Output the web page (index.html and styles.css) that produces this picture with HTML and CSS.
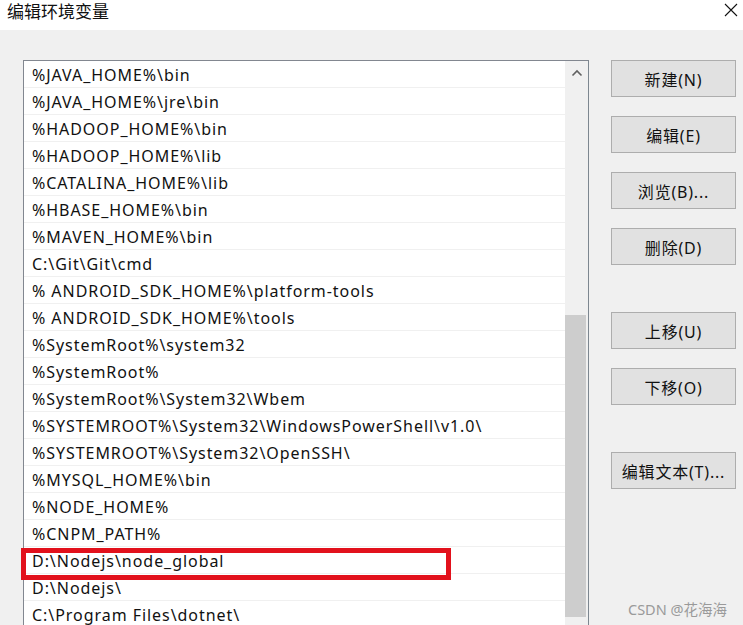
FILE: index.html
```html
<!DOCTYPE html>
<html lang="zh-CN">
<head>
<meta charset="utf-8">
<title>编辑环境变量</title>
<link rel="stylesheet" href="styles.css">
</head>
<body>
<div class="window">
  <div class="titlebar">
    <span class="title">编辑环境变量</span>
    <svg class="close" width="14" height="14" viewBox="0 0 14 14"><path d="M1 1 L13 13 M13 1 L1 13" stroke="#111" stroke-width="1.1" fill="none"/></svg>
  </div>
  <div class="content">
    <div class="listbox">
      <ul class="rows">
        <li class="row">%JAVA_HOME%\bin</li>
        <li class="row">%JAVA_HOME%\jre\bin</li>
        <li class="row">%HADOOP_HOME%\bin</li>
        <li class="row">%HADOOP_HOME%\lib</li>
        <li class="row">%CATALINA_HOME%\lib</li>
        <li class="row">%HBASE_HOME%\bin</li>
        <li class="row">%MAVEN_HOME%\bin</li>
        <li class="row">C:\Git\Git\cmd</li>
        <li class="row">% ANDROID_SDK_HOME%\platform-tools</li>
        <li class="row">% ANDROID_SDK_HOME%\tools</li>
        <li class="row">%SystemRoot%\system32</li>
        <li class="row">%SystemRoot%</li>
        <li class="row">%SystemRoot%\System32\Wbem</li>
        <li class="row">%SYSTEMROOT%\System32\WindowsPowerShell\v1.0\</li>
        <li class="row">%SYSTEMROOT%\System32\OpenSSH\</li>
        <li class="row">%MYSQL_HOME%\bin</li>
        <li class="row">%NODE_HOME%</li>
        <li class="row">%CNPM_PATH%</li>
        <li class="row marked">D:\Nodejs\node_global<span class="highlight"></span></li>
        <li class="row">D:\Nodejs\</li>
        <li class="row">C:\Program Files\dotnet\</li>
      </ul>
      <div class="scrollbar">
        <div class="scroll-up">
          <svg width="12" height="8" viewBox="0 0 12 8"><path d="M1.5 6.5 L6 2 L10.5 6.5" stroke="#606060" stroke-width="1.6" fill="none"/></svg>
        </div>
        <div class="thumb"></div>
      </div>
    </div>
    <div class="buttons">
      <div class="group">
        <button class="btn">新建(N)</button>
        <button class="btn">编辑(E)</button>
        <button class="btn">浏览(B)...</button>
        <button class="btn">删除(D)</button>
      </div>
      <div class="group">
        <button class="btn">上移(U)</button>
        <button class="btn">下移(O)</button>
      </div>
      <div class="group">
        <button class="btn">编辑文本(T)...</button>
      </div>
    </div>
  </div>
  <div class="watermark">CSDN @花海海</div>
</div>
</body>
</html>
```
FILE: styles.css
```css
html, body {
  margin: 0;
  padding: 0;
  height: 100%;
  overflow: hidden;
}
body {
  background: #f0f0f0;
  font-family: "Noto Sans", "Noto Sans CJK SC", sans-serif;
  color: #000;
}
.window {
  position: relative;
  height: 625px;
  overflow: hidden;
}
.titlebar {
  height: 30px;
  box-sizing: border-box;
  background: #fff;
  display: flex;
  align-items: flex-start;
  justify-content: space-between;
  padding: 1px 4px 0 7px;
}
.title {
  font-family: "Noto Sans CJK SC", sans-serif;
  font-size: 17px;
  line-height: 19px;
  color: #111;
}
.close {
  margin-top: 2px;
  margin-right: 1px;
}
.content {
  display: flex;
  align-items: flex-start;
  padding: 30px 0 0 23px;
}
.listbox {
  width: 564px;
  height: 600px;
  border: 1px solid #828790;
  border-right-color: #7d8790;
  background: #fff;
  display: flex;
}
.rows {
  list-style: none;
  margin: 0;
  padding: 0;
  flex: 1;
}
.row {
  position: relative;
  height: 26px;
  border-bottom: 1px solid #f0f0f0;
  padding-left: 8px;
  font-size: 16px;
  line-height: 28px;
  letter-spacing: 0.95px;
  white-space: nowrap;
  color: #111;
}
.highlight {
  position: absolute;
  left: -3px;
  top: 1px;
  width: 420px;
  height: 22px;
  border: 5px solid #e2111c;
}
.scrollbar {
  width: 23px;
  background: #f0f0f0;
  display: flex;
  flex-direction: column;
}
.scroll-up {
  height: 24px;
  display: flex;
  align-items: center;
  justify-content: center;
}
.thumb {
  margin-top: 230px;
  width: 21px;
  height: 302px;
  background: #cdcdcd;
}
.buttons {
  margin-left: 22px;
  display: flex;
  flex-direction: column;
  gap: 47px;
}
.group {
  display: flex;
  flex-direction: column;
  gap: 19px;
}
.btn {
  width: 125px;
  height: 37px;
  border: 1px solid #adadad;
  background: #e1e1e1;
  font-family: "Noto Sans", "Noto Sans CJK SC", sans-serif;
  font-size: 16px;
  letter-spacing: 0.8px;
  color: #111;
  padding: 0;
}
.watermark {
  position: absolute;
  left: 628px;
  top: 598px;
  font-size: 14.5px;
  color: #9a9a9a;
  font-family: "Noto Sans", "Noto Sans CJK SC", sans-serif;
}
```
